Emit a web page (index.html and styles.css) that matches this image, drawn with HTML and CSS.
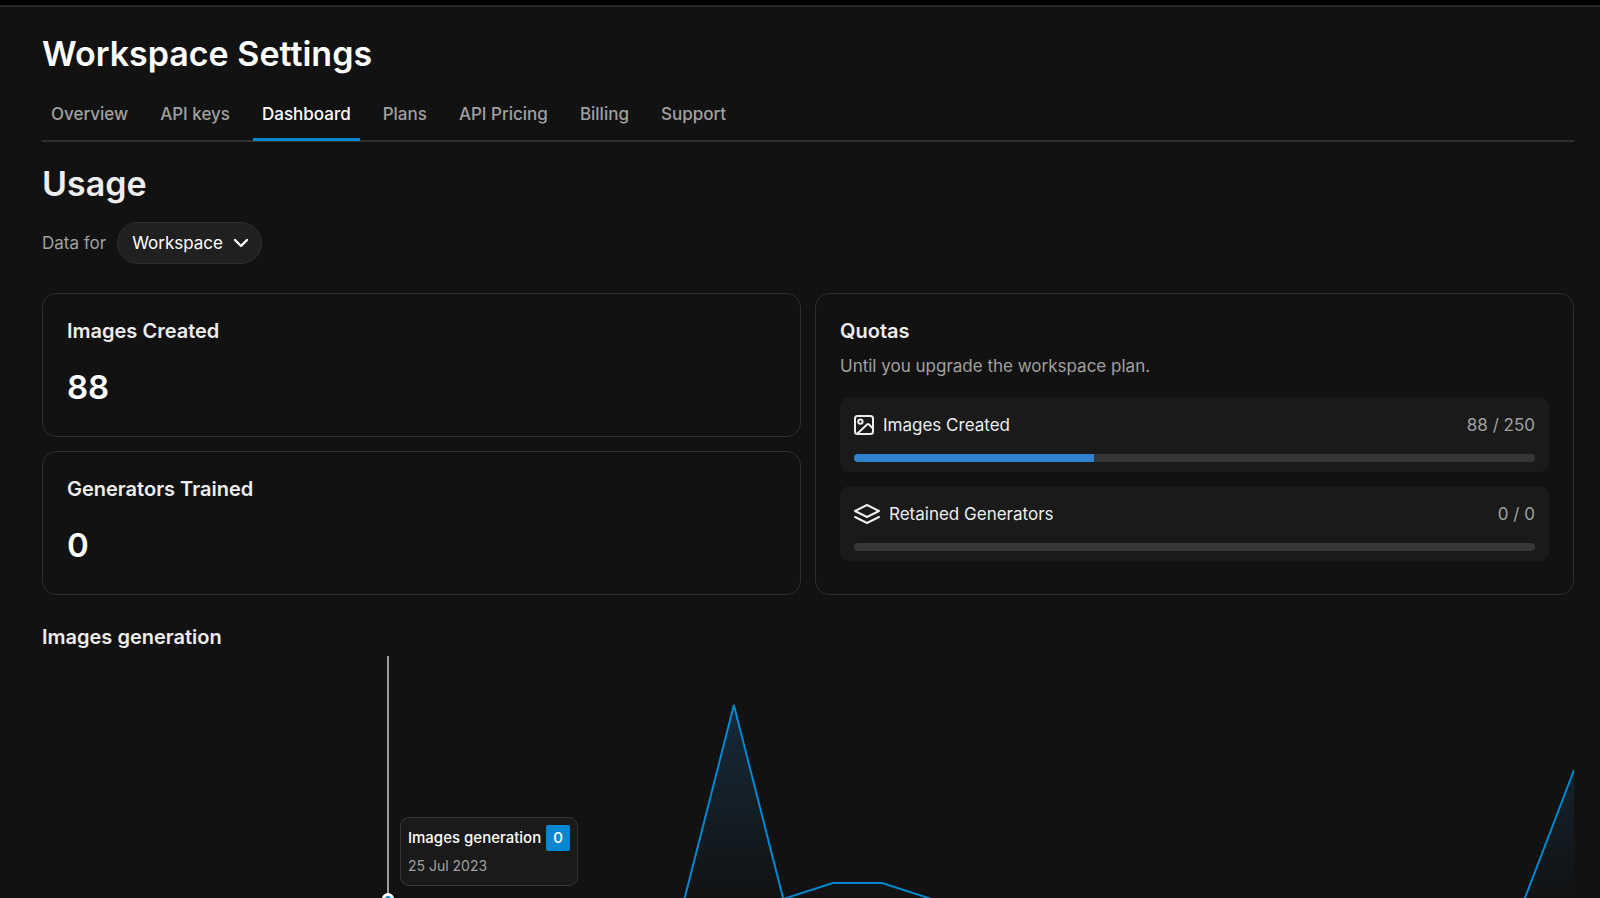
FILE: index.html
```html
<!DOCTYPE html>
<html lang="en">

<head>
    <meta charset="UTF-8">
    <meta name="viewport" content="width=device-width, initial-scale=1.0">
    <title>Workspace Settings</title>
    <link rel="stylesheet" href="styles.css">
</head>

<body>
    <main class="page">
        <h1 class="title">Workspace Settings</h1>

        <nav class="tabs">
            <a class="tab" href="#overview">Overview</a>
            <a class="tab" href="#api-keys">API keys</a>
            <a class="tab active" href="#dashboard" aria-current="page">Dashboard</a>
            <a class="tab" href="#plans">Plans</a>
            <a class="tab" href="#api-pricing">API Pricing</a>
            <a class="tab" href="#billing">Billing</a>
            <a class="tab" href="#support">Support</a>
        </nav>

        <h2 class="title usage-title">Usage</h2>

        <div class="filter">
            <label for="scope">Data for</label>
            <div class="select">
                <select id="scope">
                    <option>Workspace</option>
                </select>
                <svg class="chevron" viewBox="0 0 16 10" aria-hidden="true">
                    <path d="M2 2l6 6 6-6" />
                </svg>
            </div>
        </div>

        <div class="cards">
            <section class="card">
                <h3 class="card-title">Images Created</h3>
                <div class="card-value">88</div>
            </section>

            <section class="card quotas">
                <h3 class="card-title">Quotas</h3>
                <p class="card-text">Until you upgrade the workspace plan.</p>
                <div class="quota-list">
                    <div class="quota">
                        <div class="quota-row">
                            <svg class="icon" width="20" height="20" viewBox="0 0 20 20" aria-hidden="true">
                                <rect x="1" y="1" width="18" height="18" rx="2.5" />
                                <circle cx="6.4" cy="6.6" r="2.2" />
                                <path d="M3.5 18.5L13.3 9.3a1 1 0 0 1 1.4 0L19 13.5" />
                            </svg>
                            <span class="quota-name">Images Created</span>
                            <span class="quota-count">88 / 250</span>
                        </div>
                        <div class="bar">
                            <div class="bar-fill" style="width: 35.2%"></div>
                        </div>
                    </div>
                    <div class="quota">
                        <div class="quota-row">
                            <svg class="icon" width="26" height="20" viewBox="0 0 26 20" aria-hidden="true">
                                <path d="M13 1l12 6-12 6L1 7z" />
                                <path d="M1 13l12 6 12-6" />
                            </svg>
                            <span class="quota-name">Retained Generators</span>
                            <span class="quota-count">0 / 0</span>
                        </div>
                        <div class="bar"></div>
                    </div>
                </div>
            </section>

            <section class="card">
                <h3 class="card-title">Generators Trained</h3>
                <div class="card-value">0</div>
            </section>
        </div>

        <h3 class="card-title chart-title">Images generation</h3>

        <div class="chart">
            <!-- one x unit per day, 31 days -->
            <svg class="plot" viewBox="0 0 31 243" preserveAspectRatio="none" aria-hidden="true">
                <defs>
                    <linearGradient id="fade" x1="0" y1="0" x2="0" y2="1">
                        <stop offset="0" stop-color="#2080c8" stop-opacity="0.22" />
                        <stop offset="1" stop-color="#2080c8" stop-opacity="0" />
                    </linearGradient>
                </defs>
                <path class="area" d="M0 243H13L14 49L15 243L16 227H17L18 243H30L31 114V243Z" />
                <path class="line" d="M0 243H13L14 49L15 243L16 227H17L18 243H30L31 114" />
            </svg>
            <div class="cursor">
                <div class="tooltip">
                    <div class="tooltip-row">
                        <span>Images generation</span>
                        <span class="badge">0</span>
                    </div>
                    <div class="tooltip-date">25 Jul 2023</div>
                </div>
            </div>
        </div>
    </main>
</body>

</html>
```

FILE: styles.css
```css
:root {
    --background: #121212;
    --surface: #1a1a1a;
    --border: #2e2e2e;
    --track: #363636;
    --text: #ededed;
    --text-strong: #ffffff;
    --text-muted: #a0a0a0;
    --accent: #0288d1;
    --progress: #3182ce;
}

*,
*::after {
    box-sizing: border-box;
}

body {
    display: flex;
    flex-direction: column;
    height: 100vh;
    margin: 0;
    overflow: hidden;
    border-top: 5px solid #000000;
    font-family: Inter, "Open Sans", sans-serif;
    font-size: 17px;
    line-height: 24px;
    color: var(--text);
    background: var(--background);
}

h1,
h2,
h3,
p {
    margin: 0;
}

.page {
    display: flex;
    flex-direction: column;
    flex: 1;
    min-height: 0;
    padding: 23px 26px 0 42px;
    border-top: 2px solid #272727;
}

.title {
    font-size: 34px;
    line-height: 48px;
    font-weight: 600;
    color: var(--text-strong);
}

.tabs {
    display: flex;
    gap: 14px;
    margin-top: 12px;
    border-bottom: 2px solid var(--border);
}

.tab {
    margin-bottom: -1px;
    padding: 12px 9px;
    border-bottom: 3px solid transparent;
    border-radius: 2px 2px 0 0;
    font-weight: 500;
    color: var(--text-muted);
    text-decoration: none;
}

.tab.active {
    border-bottom-color: var(--accent);
    color: var(--text-strong);
}

.usage-title {
    margin-top: 18px;
    color: var(--text);
}

.filter {
    display: flex;
    align-items: center;
    gap: 11px;
    margin-top: 14px;
    color: var(--text-muted);
}

.select {
    position: relative;
}

select {
    display: block;
    height: 42px;
    padding: 0 38px 0 14px;
    appearance: none;
    border: 1px solid var(--border);
    border-radius: 21px;
    font: inherit;
    color: var(--text-strong);
    background: #202020;
    cursor: pointer;
}

.chevron {
    position: absolute;
    right: 13px;
    top: 16px;
    width: 16px;
    height: 10px;
    fill: none;
    stroke: var(--text-strong);
    stroke-width: 2.4;
    stroke-linecap: round;
    stroke-linejoin: round;
    pointer-events: none;
}

.cards {
    display: grid;
    grid-template-columns: 1fr 1fr;
    gap: 14px;
    margin-top: 29px;
}

.card {
    padding: 23px 24px 25px;
    border: 1px solid var(--border);
    border-radius: 14px;
}

.quotas {
    grid-row: span 2;
}

.card-title {
    font-size: 20px;
    line-height: 28px;
    font-weight: 600;
}

.card-value {
    margin-top: 18px;
    font-size: 33px;
    line-height: 48px;
    font-weight: 600;
    color: var(--text-strong);
}

.card-text {
    margin-top: 9px;
    color: var(--text-muted);
}

.quota-list {
    display: flex;
    flex-direction: column;
    gap: 14px;
    margin-top: 19px;
}

.quota {
    padding: 14px 14px 10px;
    border-radius: 9px;
    background: var(--surface);
}

.quota-row {
    display: flex;
    align-items: center;
    gap: 9px;
    height: 28px;
}

.icon {
    fill: none;
    stroke: var(--text);
    stroke-width: 2;
    stroke-linejoin: round;
    stroke-linecap: round;
}

.quota-count {
    margin-left: auto;
    color: var(--text-muted);
}

.bar {
    height: 8px;
    margin-top: 15px;
    overflow: hidden;
    border-radius: 4px;
    background: var(--track);
}

.bar-fill {
    height: 100%;
    background: var(--progress);
}

.chart-title {
    margin-top: 28px;
}

.chart {
    position: relative;
    flex: 1;
    min-height: 0;
    margin-top: 5px;
}

.plot {
    display: block;
    width: 100%;
    height: 243px;
}

.area {
    fill: url(#fade);
}

.line {
    fill: none;
    stroke: var(--accent);
    stroke-width: 2;
    vector-effect: non-scaling-stroke;
}

/* seventh day out of 31 */
.cursor {
    position: absolute;
    left: calc(100% * 7 / 31 - 1px);
    top: 0;
    width: 2px;
    height: 243px;
    background: #9b9b9b;
}

.cursor::after {
    content: "";
    position: absolute;
    left: -5px;
    bottom: -6px;
    width: 12px;
    height: 12px;
    border: 3px solid #ffffff;
    border-radius: 50%;
    background: var(--accent);
}

.tooltip {
    position: absolute;
    left: 13px;
    top: 161px;
    padding: 7px;
    border: 1px solid #363636;
    border-radius: 9px;
    font-size: 15px;
    white-space: nowrap;
    background: var(--surface);
}

.tooltip-row {
    display: flex;
    align-items: center;
    gap: 5px;
    font-weight: 500;
    color: var(--text-strong);
}

.badge {
    padding: 1px 7px;
    border-radius: 2px;
    background: var(--accent);
}

.tooltip-date {
    margin-top: 3px;
    font-size: 14px;
    color: var(--text-muted);
}
```
